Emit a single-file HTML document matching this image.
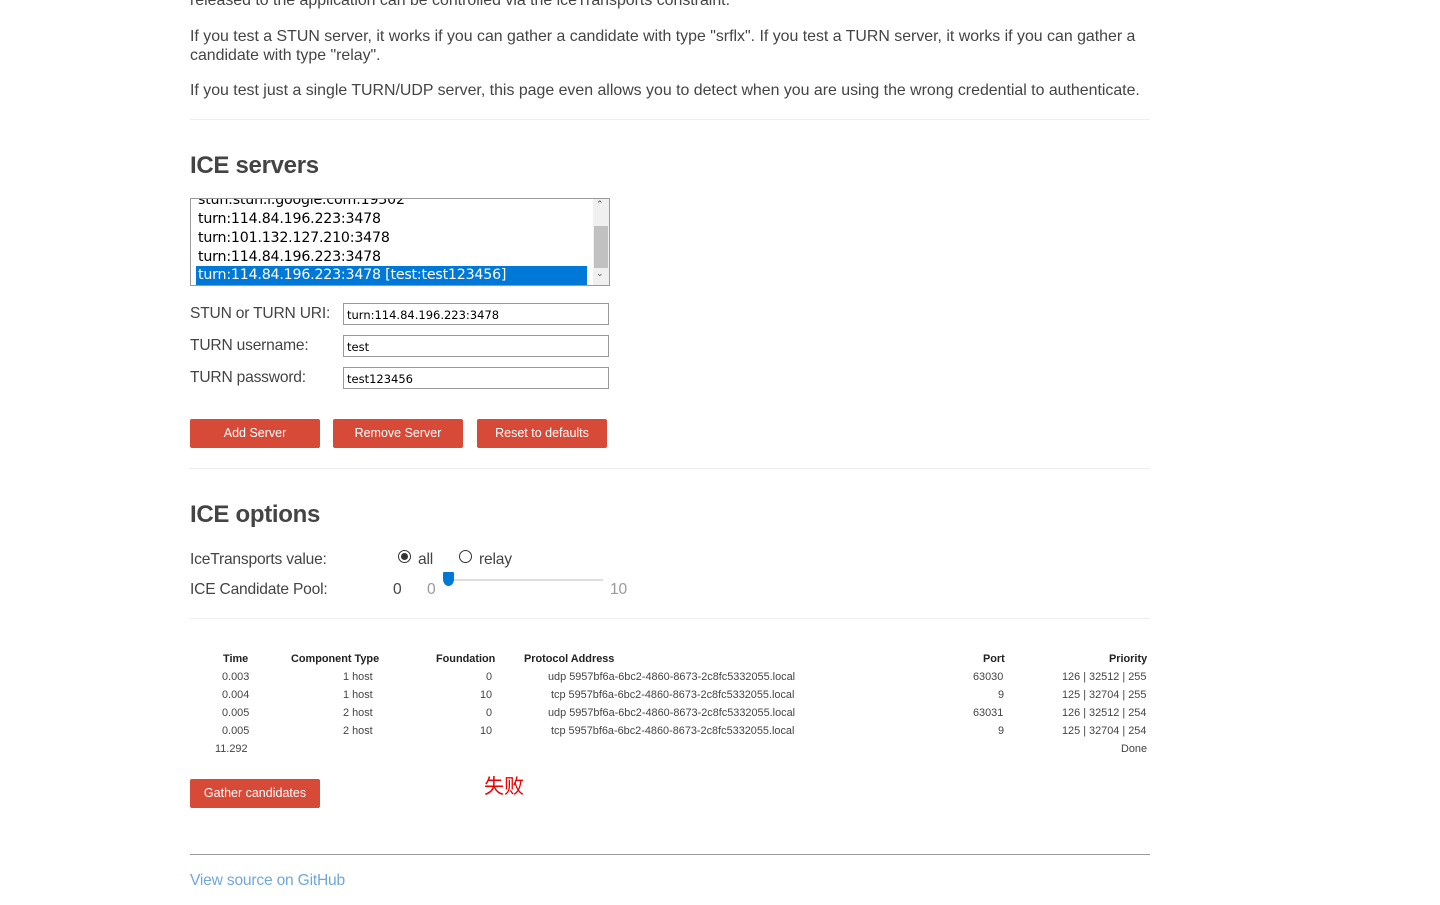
<!DOCTYPE html>
<html><head><meta charset="utf-8"><style>
*{margin:0;padding:0;box-sizing:border-box}
body{width:1440px;height:905px;background:#fff;font-family:"Liberation Sans",sans-serif;color:#444;position:relative;overflow:hidden}
.a{position:absolute;white-space:nowrap}
.p{font-size:15.9px;letter-spacing:0}
.hr{position:absolute;left:190px;width:960px;height:1px;background:#eee}
h2{position:absolute;font-size:24px;font-weight:bold;color:#444;letter-spacing:-0.3px}
.lbl{font-size:15.6px;letter-spacing:-0.2px}
.inp{position:absolute;left:343px;width:266px;height:22px;border:1px solid #999;font-family:"DejaVu Sans",sans-serif;font-size:11.5px;color:#000;padding:4px 0 0 3px}
.btn{position:absolute;height:29px;background:#d84a38;color:#fff;font-size:12.5px;text-align:center;line-height:29px;border-radius:2px}
.t{position:absolute;font-size:10.9px;color:#444;white-space:nowrap}
.b{font-weight:bold;color:#222}
</style></head><body>
<div class="a p" style="left:190px;top:-8px">released to the application can be controlled via the iceTransports constraint.</div>
<div class="a p" style="left:190px;top:28px">If you test a STUN server, it works if you can gather a candidate with type "srflx". If you test a TURN server, it works if you can gather a</div>
<div class="a p" style="left:190px;top:47px">candidate with type "relay".</div>
<div class="a p" style="left:190px;top:82px">If you test just a single TURN/UDP server, this page even allows you to detect when you are using the wrong credential to authenticate.</div>
<div class="hr" style="top:119px"></div>
<h2 style="left:190px;top:152px">ICE servers</h2>
<div style="position:absolute;left:190px;top:198px;width:420px;height:88px;border:1px solid #999;overflow:hidden;font-family:'DejaVu Sans',sans-serif;font-size:14.2px;letter-spacing:-0.2px;color:#000">
 <div class="a" style="left:7px;top:-7px">stun:stun.l.google.com:19302</div>
 <div class="a" style="left:7px;top:12px">turn:114.84.196.223:3478</div>
 <div class="a" style="left:7px;top:31px">turn:101.132.127.210:3478</div>
 <div class="a" style="left:7px;top:50px">turn:114.84.196.223:3478</div>
 <div class="a" style="left:5px;top:67px;width:391px;height:19px;background:#0078d7;color:#fff;padding:1px 0 0 2px">turn:114.84.196.223:3478 [test:test123456]</div>
 <div class="a" style="left:402px;top:0;width:17px;height:86px;background:#f0f0f0"></div>
 <div class="a" style="left:403px;top:27px;width:14px;height:42px;background:#c1c1c1"></div>
 <div class="a" style="left:405px;top:1px;font-size:9px;color:#555">&#8963;</div>
 <div class="a" style="left:405px;top:70px;font-size:9px;color:#555">&#8964;</div>
</div>
<div class="a lbl" style="left:190px;top:305px">STUN or TURN URI:</div>
<div class="a lbl" style="left:190px;top:337px">TURN username:</div>
<div class="a lbl" style="left:190px;top:369px">TURN password:</div>
<div class="inp" style="top:303px">turn:114.84.196.223:3478</div>
<div class="inp" style="top:335px">test</div>
<div class="inp" style="top:367px">test123456</div>
<div class="btn" style="left:190px;top:419px;width:130px">Add Server</div>
<div class="btn" style="left:333px;top:419px;width:130px">Remove Server</div>
<div class="btn" style="left:477px;top:419px;width:130px">Reset to defaults</div>
<div class="hr" style="top:468px"></div>
<h2 style="left:190px;top:501px">ICE options</h2>
<div class="a lbl" style="left:190px;top:551px">IceTransports value:</div>
<div class="a" style="left:398px;top:550px;width:13px;height:13px;border:1px solid #333;border-radius:50%"></div>
<div class="a" style="left:401px;top:553px;width:7px;height:7px;background:#333;border-radius:50%"></div>
<div class="a lbl" style="left:418px;top:551px">all</div>
<div class="a" style="left:459px;top:550px;width:13px;height:13px;border:1px solid #333;border-radius:50%"></div>
<div class="a lbl" style="left:479px;top:551px">relay</div>
<div class="a lbl" style="left:190px;top:581px">ICE Candidate Pool:</div>
<div class="a lbl" style="left:393px;top:581px">0</div>
<div class="a lbl" style="left:427px;top:581px;color:#999">0</div>
<div class="a" style="left:446px;top:579px;width:157px;height:2px;background:#ddd"></div>
<div class="a" style="left:443px;top:572px;width:11px;height:14px;background:#0078d7;border-radius:1px 1px 50% 50%"></div>
<div class="a lbl" style="left:610px;top:581px;color:#999">10</div>
<div class="hr" style="top:618px"></div>
<div class="t b" style="left:223px;top:653px">Time</div>
<div class="t b" style="left:291px;top:653px">Component Type</div>
<div class="t b" style="left:436px;top:653px">Foundation</div>
<div class="t b" style="left:524px;top:653px">Protocol Address</div>
<div class="t b" style="left:983px;top:653px">Port</div>
<div class="t b" style="left:1109px;top:653px">Priority</div>
<div class="t" style="left:222px;top:671px">0.003</div><div class="t" style="left:343px;top:671px">1 host</div><div class="t" style="left:486px;top:671px">0</div><div class="t" style="left:548px;top:671px">udp 5957bf6a-6bc2-4860-8673-2c8fc5332055.local</div><div class="t" style="left:973px;top:671px">63030</div><div class="t" style="left:1062px;top:671px">126 | 32512 | 255</div>
<div class="t" style="left:222px;top:689px">0.004</div><div class="t" style="left:343px;top:689px">1 host</div><div class="t" style="left:480px;top:689px">10</div><div class="t" style="left:551px;top:689px">tcp 5957bf6a-6bc2-4860-8673-2c8fc5332055.local</div><div class="t" style="left:998px;top:689px">9</div><div class="t" style="left:1062px;top:689px">125 | 32704 | 255</div>
<div class="t" style="left:222px;top:707px">0.005</div><div class="t" style="left:343px;top:707px">2 host</div><div class="t" style="left:486px;top:707px">0</div><div class="t" style="left:548px;top:707px">udp 5957bf6a-6bc2-4860-8673-2c8fc5332055.local</div><div class="t" style="left:973px;top:707px">63031</div><div class="t" style="left:1062px;top:707px">126 | 32512 | 254</div>
<div class="t" style="left:222px;top:725px">0.005</div><div class="t" style="left:343px;top:725px">2 host</div><div class="t" style="left:480px;top:725px">10</div><div class="t" style="left:551px;top:725px">tcp 5957bf6a-6bc2-4860-8673-2c8fc5332055.local</div><div class="t" style="left:998px;top:725px">9</div><div class="t" style="left:1062px;top:725px">125 | 32704 | 254</div>
<div class="t" style="left:215px;top:743px">11.292</div><div class="t" style="left:1121px;top:743px">Done</div>
<div class="btn" style="left:190px;top:779px;width:130px">Gather candidates</div>
<div class="a" style="left:484px;top:770px;font-size:20px;color:#e00;font-family:'Liberation Sans','Noto Sans CJK SC',sans-serif">失败</div>
<div class="a" style="left:190px;top:854px;width:960px;height:1px;background:#999"></div>
<div class="a lbl" style="left:190px;top:872px;color:#6fa8dc">View source on GitHub</div>
</body></html>
